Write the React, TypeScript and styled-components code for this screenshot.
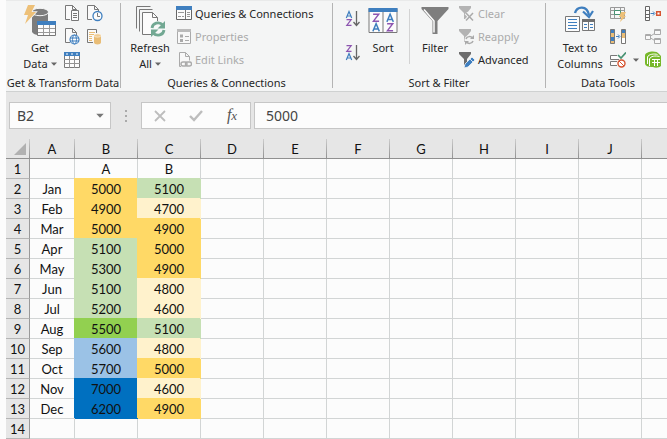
import React from "react";
import styled, { createGlobalStyle } from "styled-components";

const GlobalStyle = createGlobalStyle`
  * { box-sizing: border-box; }
  html { overflow: hidden; }
  body {
    margin: 0;
    background: #fcfcfc;
    color: #262626;
    font: 11px/16px "Noto Sans", "Open Sans", sans-serif;
  }
  button, input { font: inherit; color: inherit; }
`;

const Page = styled.main`
  padding-left: 6px;
  overflow: hidden;
`;

/* ---------- Ribbon ---------- */

const Ribbon = styled.header`
  display: flex;
  height: 92px;
  padding-top: 1px;
  background: #f4f5f5;
  border-top: 1px solid #e9eaea;
  border-bottom: 1px solid #cfd1d1;
`;

const Group = styled.section<{ $width: number }>`
  flex: none;
  display: flex;
  flex-direction: column;
  width: ${(p) => p.$width}px;
`;

const GroupBody = styled.div<{ $indent: number }>`
  display: flex;
  height: 73px;
  padding-left: ${(p) => p.$indent}px;
`;

const GroupLabel = styled.h2`
  margin: 0;
  font-size: 11px;
  line-height: 16px;
  font-weight: 400;
  text-align: center;
  white-space: nowrap;
`;

const Separator = styled.div<{ $inner?: boolean }>`
  flex: none;
  width: 1px;
  height: ${(p) => (p.$inner ? 55 : 85)}px;
  margin: ${(p) => (p.$inner ? "7px 8px 0" : "1px 0 0")};
  background: ${(p) => (p.$inner ? "#d3d3d3" : "#b4b4b4")};
`;

const PlainButton = styled.button`
  padding: 0;
  border: 0;
  background: none;
  white-space: nowrap;
  &:hover:enabled { background: #dcdcdc; }
  &:disabled { color: #ababab; }
  svg { display: block; }
`;

const LargeButton = styled(PlainButton)<{ $width: number }>`
  flex: none;
  display: flex;
  flex-direction: column;
  align-items: center;
  width: ${(p) => p.$width}px;
  padding-top: 2px;
`;

const LargeIcon = styled.span`
  display: flex;
  height: 36px;
`;

const Line = styled.span`
  display: flex;
  align-items: center;
  gap: 3px;
`;

const IconGrid = styled.div<{ $columns: string; $row?: number }>`
  display: grid;
  grid-template-columns: ${(p) => p.$columns};
  grid-auto-rows: ${(p) => p.$row ?? 23}px;
`;

const IconButton = styled(PlainButton)`
  display: grid;
  place-items: center;
`;

const CommandList = styled.div<{ $indent?: number }>`
  display: flex;
  flex-direction: column;
  padding-left: ${(p) => p.$indent ?? 0}px;
`;

const Command = styled(PlainButton)`
  display: flex;
  align-items: center;
  gap: 3px;
  height: 23px;
`;

/* ---------- Formula bar ---------- */

const FormulaBar = styled.div`
  display: flex;
  height: 47px;
  padding: 10px 0 10px 3px;
  background: #e6e6e6;
  color: #444;
  font-size: 14px;
`;

const Box = styled.div<{ $width: number }>`
  flex: none;
  display: flex;
  width: ${(p) => p.$width}px;
  background: #fcfcfc;
  border: 1px solid #c6c6c6;
`;

const Field = styled.input`
  flex: 1;
  min-width: 0;
  padding: 0 0 0 7px;
  border: 0;
  outline: 0;
  background: transparent;
`;

const ValueField = styled(Field)`
  margin-left: 3px;
  padding-left: 11px;
  background: #fcfcfc;
  border: 1px solid #c6c6c6;
  border-right: 0;
`;

const BoxButton = styled(PlainButton)`
  flex: 1;
  display: grid;
  place-items: center;
`;

const DropButton = styled(BoxButton)`
  flex: 0 0 20px;
`;

const Grip = styled.span`
  flex: none;
  display: grid;
  place-items: center;
  width: 30px;
`;

const FxLabel = styled.span`
  font: italic 16px/20px "Liberation Serif", serif;
  color: #555;
  small { font-size: 13px; }
`;

/* ---------- Sheet ---------- */

const Sheet = styled.table`
  width: 100%;
  min-width: 700px;
  table-layout: fixed;
  border-collapse: separate;
  border-spacing: 0;
  color: #111;
  font: 13px/18px Lato, "Noto Sans", sans-serif;
  tr { height: 20px; }
  th, td { height: 20px; padding: 1px 0 0; font-weight: 400; text-align: center; }
`;

const Col = styled.col<{ $width?: number }>`
  width: ${(p) => (p.$width ? `${p.$width}px` : "auto")};
`;

const ColumnHead = styled.th`
  border-right: 1px solid;
  border-image: linear-gradient(#cfcfcf, #8f8f8f) 1;
  border-bottom: 1px solid #999;
  background: #e6e6e6;
`;

const Corner = styled(ColumnHead)`
  svg { display: block; margin-left: auto; margin-right: 3px; }
`;

const RowHead = styled.th`
  background: #e6e6e6;
  border-right: 1px solid #999;
  border-bottom: 1px solid #b5b5b5;
`;

const Cell = styled.td<{ $fill?: string }>`
  border: solid ${(p) => p.$fill ?? "#d2d5d5"};
  border-width: 0 1px 1px 0;
  ${(p) => p.$fill && `background: ${p.$fill}; box-shadow: -1px -1px 0 ${p.$fill};`}
`;

/* ---------- Icons ---------- */

const grey = "#787878";
const blue = "#3f7fbf";
const orange = "#e9bd76";

const Caret = ({ w = 6, color = "#666" }: { w?: number; color?: string }) => (
  <svg width={w} height={w / 2 + 1} viewBox="0 0 6 4"><path d="M0 .5h6L3 3.7z" fill={color} /></svg>
);

const GetDataIcon = () => (
  <svg width="34" height="34" viewBox="0 0 34 34">
    <path d="M9 8v20c1 2 4 3 6 3V17h10V8z" fill="#7c7c7c" />
    <ellipse cx="17" cy="8" rx="8.5" ry="3.7" fill="#7c7c7c" stroke="#f4f5f5" strokeWidth="1" />
    <path d="M5 1h7L8.500 8H13L2 20l3-9H1z" fill="#edc078" stroke="#f4f5f5" strokeWidth="1.600" paintOrder="stroke" />
    <path d="M14.500 17.500h18v14h-18z" fill="#fcfcfc" stroke="#777" />
    <path d="M14 17h19v4H14z" fill={blue} />
    <path d="M20.500 21v10M26.500 21v10M15 24.500h17M15 28.500h17" stroke="#9a9a9a" fill="none" />
  </svg>
);

const Doc = ({ stroke = grey }: { stroke?: string }) => (
  <path d="M7 14.500H2.500V.5h7l4 4v4M9.500.5v4h4" fill="#fafafa" stroke={stroke} />
);

const DocTextIcon = () => (
  <svg width="18" height="17" viewBox="0 0 18 17">
    <Doc /><path d="M8.500 5.500h7v10h-7z" fill="#fcfcfc" stroke={grey} />
    <path d="M10 8.500h4M10 10.500h4M10 12.500h4" stroke={grey} />
  </svg>
);
const DocClockIcon = () => (
  <svg width="18" height="17" viewBox="0 0 18 17">
    <Doc /><circle cx="12.500" cy="11" r="4.500" fill="#fcfcfc" stroke={blue} strokeWidth="1.300" />
    <path d="M12.500 8v3.500H15" fill="none" stroke={grey} />
  </svg>
);
const DocGlobeIcon = () => (
  <svg width="18" height="17" viewBox="0 0 18 17">
    <Doc /><circle cx="11.500" cy="11.500" r="4.500" fill="#fcfcfc" stroke={blue} strokeWidth="1.200" />
    <path d="M7 10h9M7 13h9" stroke={blue} /><ellipse cx="11.500" cy="11.500" rx="2" ry="4.500" fill="none" stroke={blue} />
  </svg>
);
const RecentIcon = () => (
  <svg width="16" height="17" viewBox="0 0 16 17">
    <path d="M7 14.500H1.500V1.500h9V5" fill="#fafafa" stroke={grey} />
    <path d="M3 4.500h6M3 6.500h5M3 8.500h3M3 10.500h3M3 12.500h3" stroke={orange} />
    <path d="M8 7.500v7c0 2.500 7 2.500 7 0v-7z" fill={orange} />
    <ellipse cx="11.500" cy="7.500" rx="3.500" ry="1.700" fill="#f0cd95" stroke="#fff" strokeWidth=".5" />
  </svg>
);
const TableIcon = () => (
  <svg width="16" height="16" viewBox="0 0 16 16">
    <path d="M.5.5h15v15H.5z" fill="#fcfcfc" stroke={grey} />
    <path d="M0 0h16v4H0z" fill={blue} /><path d="M2 2h2M7 2h2M12 2h2" stroke="#fff" />
    <path d="M5.500 4v12M10.500 4v12M0 7.500h16M0 11.500h16" stroke="#929292" />
  </svg>
);
const RefreshIcon = () => (
  <svg width="32" height="34" viewBox="0 0 32 34">
    <path d="M2.500 24.500V2.500h14M5.500 27.500V5.500h13" fill="none" stroke={grey} />
    <path d="M8.500 30.500v-22h10l5 5v17z" fill="#fcfcfc" stroke={grey} />
    <path d="M18.500 8.500v5h5" fill="none" stroke={grey} />
    <circle cx="24" cy="25" r="8" fill="#f7f8f8" />
    <g fill="none" stroke="#72a893" strokeWidth="2.800">
      <path d="M18 24c.5-5 7-7 11-3" /><path d="M30 26c-.5 5-7 7-11 3" />
    </g>
    <path d="M31 17v7.500h-7.500zM17 33v-7.500h7.500z" fill="#72a893" />
  </svg>
);
const QueriesIcon = () => (
  <svg width="16" height="15" viewBox="0 0 16 15">
    <path d="M.5.5h15v13H.5z" fill="#fcfcfc" stroke="#666" /><path d="M0 0h16v4H0z" fill={blue} />
    <path d="M9.500 4v9" stroke="#777" /><path d="M2 6.500h6M2 10.500h3M6 10.500h2M11 6.500h3M11 8.500h3M11 10.500h3" stroke="#999" />
  </svg>
);
const PropertiesIcon = () => (
  <svg width="16" height="16" viewBox="0 0 16 16">
    <path d="M1.500.5h13v14h-13z" fill="#f8f8f8" stroke="#aaa" /><path d="M1 0h14v3H1z" fill="#bbb" />
    <path d="M4 5.500h3v3H4zM4 10h3v3H4z" fill="#aaa" /><path d="M9 7.500h4M9 11.500h4" stroke="#aaa" />
  </svg>
);
const LinksIcon = () => (
  <svg width="16" height="16" viewBox="0 0 16 16">
    <path d="M5 14.500H3.500V.5h6l4 4v4M9.500.5v4h4" fill="#f8f8f8" stroke="#aaa" />
    <g fill="none" stroke="#aaa" strokeWidth="1.400"><rect x="5" y="10" width="6" height="4" rx="2" /><rect x="9.500" y="10" width="6" height="4" rx="2" /></g>
  </svg>
);

/* Strokes for the A and Z marks used by the sort glyphs, on a 6 by 7 grid. */
const Mark = ({ kind, x, y, s = 1 }: { kind: "A" | "Z"; x: number; y: number; s?: number }) => (
  <g transform={`translate(${x} ${y}) scale(${s})`} fill="none" strokeWidth={1.200} stroke={kind === "A" ? blue : "#8d55b0"}>
    {kind === "A" ? <path d="M.3 7 3 .5 5.700 7M1.200 5h3.600" /> : <path d="M.5.6h4.700L.8 6.400h4.700" />}
  </g>
);
const SortSmallIcon = ({ desc }: { desc?: boolean }) => (
  <svg width="16" height="18" viewBox="0 0 16 18">
    <Mark kind={desc ? "Z" : "A"} x={1} y={1} /><Mark kind={desc ? "A" : "Z"} x={1} y={9} />
    <path d="M11.500 1v14M8.500 12l3 3.500 3-3.500" fill="none" stroke="#666" strokeWidth="1.300" />
  </svg>
);
const SortIcon = () => (
  <svg width="30" height="32" viewBox="0 0 30 32">
    <path d="M1 4.500h28v24H1z" fill="#fcfcfc" stroke={grey} /><path d="M.5 4h29v4H.5z" fill={blue} />
    <path d="M15 8v20" stroke={grey} />
    <Mark kind="Z" x={4.500} y={9.500} s={1.200} /><Mark kind="A" x={4.500} y={19} s={1.200} />
    <Mark kind="A" x={18.500} y={9.500} s={1.200} /><Mark kind="Z" x={18.500} y={19} s={1.200} />
  </svg>
);
const FilterIcon = () => (
  <svg width="28" height="32" viewBox="0 0 28 32">
    <path d="M.5 3h27v2l-11 12v13h-5V17L.5 5z" fill="#7e7e7e" />
    <path d="M3 5.500 13 17v11.500" fill="none" stroke="#fcfcfc" strokeWidth="1.500" />
  </svg>
);
const Funnel = ({ color }: { color: string }) => <path d="M0 0h12v2L8 7v6H5V7L0 2z" fill={color} />;
const ClearIcon = () => (
  <svg width="16" height="16" viewBox="0 0 16 16"><Funnel color="#b3b3b3" /><path d="m7 7 7 7.500m0-7.500-7 7.500" stroke="#f4f5f5" strokeWidth="3.500" /><path d="m7 7 7 7.500m0-7.500-7 7.500" stroke="#aaa" strokeWidth="1.500" /></svg>
);
const ReapplyIcon = () => (
  <svg width="16" height="16" viewBox="0 0 16 16">
    <Funnel color="#b3b3b3" /><circle cx="10.500" cy="11" r="5" fill="#f4f5f5" />
    <path d="M7 10c1-3 5-3 6.500-1M14 12c-1 3-5 3-6.500 1" fill="none" stroke="#aaa" strokeWidth="1.500" />
    <path d="M15 6v4h-4zM6 16v-4h4z" fill="#aaa" />
  </svg>
);
const AdvancedIcon = () => (
  <svg width="16" height="16" viewBox="0 0 16 16">
    <Funnel color="#6d6d6d" /><path d="m5 16 1-4 7-7 3 3-7 7z" fill={blue} stroke="#f4f5f5" strokeWidth=".8" /><path d="m11 7 3 3" stroke="#fff" strokeWidth=".8" />
  </svg>
);
const TextColumnsIcon = () => (
  <svg width="32" height="34" viewBox="0 0 32 34">
    <path d="M11 9c2-7 12-8 14 2" fill="none" stroke={blue} strokeWidth="2.400" /><path d="M19 7.500 25 13l4-6" fill="none" stroke={blue} strokeWidth="2.200" />
    <path d="M1.500 12.500h14v15h-14z" fill="#fcfcfc" stroke={grey} />
    <path d="M4 15.500h9M4 18.500h9M4 21.500h9M4 24.500h9" stroke={blue} />
    <path d="M18.500 16.500h12v10h-12z" fill="#fcfcfc" stroke={grey} /><path d="M18 15h13v3H18z" fill="#707070" />
    <path d="M24.500 18v9" stroke={grey} /><path d="M20 20.500h3M20 23.500h3M26 20.500h3M26 23.500h3" stroke={blue} />
  </svg>
);
const FlashFillIcon = () => (
  <svg width="16" height="16" viewBox="0 0 16 16">
    <path d="M.5 1.500h14v11H.5zM.5 4.500h14M.5 8.500h14M4.500 1v11M10.500 1v11" fill="none" stroke="#999" />
    <path d="M4.500 4.500h6v4h-6z" fill="#fff" stroke="#469171" /><path d="M11 6h5l-2 4h2l-6 6 1.500-5H9z" fill="#edc078" />
  </svg>
);
const DuplicatesIcon = () => (
  <svg width="16" height="16" viewBox="0 0 16 16">
    <path d="M.5.500h4v14h-4z" fill={blue} stroke={grey} /><path d="M1 4h3v4H1zM1 12h3v2H1z" fill={orange} />
    <path d="M11.500.5h4v14h-4z" fill={orange} stroke={grey} /><path d="M12 1h3v3h-3z" fill={blue} /><path d="M12 9h3v5h-3z" fill="#fff" />
    <path d="M6 7.500h3M8 5.500l2 2-2 2" fill="none" stroke={blue} />
  </svg>
);
const ValidationIcon = () => (
  <svg width="16" height="16" viewBox="0 0 16 16">
    <path d="M9 7.500H.5v-4H7M7 13.500H.5v-4H7" fill="#fcfcfc" stroke={grey} />
    <path d="m8 3 3 3 5-5.500" fill="none" stroke="#469171" strokeWidth="1.700" />
    <circle cx="11.500" cy="11.500" r="3.500" fill="#fff" stroke="#d65532" strokeWidth="1.400" /><path d="m9 9 5 5" stroke="#d65532" />
  </svg>
);
const ConsolidateIcon = () => (
  <svg width="16" height="16" viewBox="0 0 16 16">
    <path d="M.5.5h4v14h-4zM.5 4.500h4M.5 8.500h4M.5 11.500h4" fill="#fcfcfc" stroke="#666" />
    <path d="M5.500 7.500H9M8 5.500l2 2-2 2" fill="none" stroke={blue} /><path d="M11.700 5.700h3.600v3.600h-3.600z" fill="#fff" stroke="#d65532" strokeWidth="1.500" />
  </svg>
);
const RelationsIcon = () => (
  <svg width="16" height="16" viewBox="0 0 16 16">
    <path d="m4 8 8-5M4 8l8 5" stroke="#aaa" />
    <path d="M.5 5.500h5v5h-5zM9.500.5h6v5h-6zM9.500 9.500h6v5h-6z" fill="#f8f8f8" stroke="#aaa" />
    <path d="M1 6.500h4M10 1.500h5M10 10.500h5" stroke="#aaa" />
  </svg>
);
const DataModelIcon = () => (
  <svg width="17" height="17" viewBox="0 0 17 17">
    <path d="M0 4C1 0 12-1 14 3l2 2v10c-2 2-6 2-8 1-5 0-8-1-8-4z" fill="#77b82a" />
    <path d="M2.500 13V6c1-3 7-3.500 10-2.500M4.500 15V8c1-3 6-3.500 10-2.500" fill="none" stroke="#fff" />
    <path d="M7 8.500h8M7 11.500h8M9.500 8v7M12.500 8v7" fill="none" stroke="#fff" />
  </svg>
);

/* ---------- Data ---------- */

const gold = "#ffd966";
const cream = "#fff2cc";
const mint = "#c6e0b4";
const sky = "#9bc2e6";
const deep = "#0070c0";

const columns = ["A", "B", "C", "D", "E", "F", "G", "H", "I", "J", ""];

type Entry = [string, number, string, number, string];
const months: Entry[] = [
  ["Jan", 5000, gold, 5100, mint],
  ["Feb", 4900, gold, 4700, cream],
  ["Mar", 5000, gold, 4900, gold],
  ["Apr", 5100, mint, 5000, gold],
  ["May", 5300, mint, 4900, gold],
  ["Jun", 5100, mint, 4800, cream],
  ["Jul", 5200, mint, 4600, cream],
  ["Aug", 5500, "#92d050", 5100, mint],
  ["Sep", 5600, sky, 4800, cream],
  ["Oct", 5700, sky, 5000, gold],
  ["Nov", 7000, deep, 4600, cream],
  ["Dec", 6200, deep, 4900, gold],
];

const Blanks = ({ count }: { count: number }) => (
  <>{Array.from({ length: count }, (_, i) => <Cell key={i} />)}</>
);

export default function App() {
  return (
    <Page>
      <GlobalStyle />
      <Ribbon>
        <Group $width={114}>
          <GroupBody $indent={13}>
            <LargeButton $width={42}>
              <LargeIcon><GetDataIcon /></LargeIcon>
              <Line>Get</Line>
              <Line>Data <Caret /></Line>
            </LargeButton>
            <IconGrid $columns="22px 22px">
              <IconButton aria-label="From Text/CSV"><DocTextIcon /></IconButton>
              <IconButton aria-label="Recent Sources"><DocClockIcon /></IconButton>
              <IconButton aria-label="From Web"><DocGlobeIcon /></IconButton>
              <IconButton aria-label="Existing Connections"><RecentIcon /></IconButton>
              <IconButton aria-label="From Table/Range"><TableIcon /></IconButton>
            </IconGrid>
          </GroupBody>
          <GroupLabel>Get &amp; Transform Data</GroupLabel>
        </Group>
        <Separator />
        <Group $width={211}>
          <GroupBody $indent={4}>
            <LargeButton $width={50}>
              <LargeIcon><RefreshIcon /></LargeIcon>
              <Line>Refresh</Line>
              <Line>All <Caret /></Line>
            </LargeButton>
            <CommandList $indent={1}>
              <Command><QueriesIcon />Queries &amp; Connections</Command>
              <Command disabled><PropertiesIcon />Properties</Command>
              <Command disabled><LinksIcon />Edit Links</Command>
            </CommandList>
          </GroupBody>
          <GroupLabel>Queries &amp; Connections</GroupLabel>
        </Group>
        <Separator />
        <Group $width={212}>
          <GroupBody $indent={8}>
            <IconGrid $columns="24px" $row={34}>
              <IconButton aria-label="Sort A to Z"><SortSmallIcon /></IconButton>
              <IconButton aria-label="Sort Z to A"><SortSmallIcon desc /></IconButton>
            </IconGrid>
            <LargeButton $width={36}>
              <LargeIcon><SortIcon /></LargeIcon>
              <Line>Sort</Line>
            </LargeButton>
            <Separator $inner />
            <LargeButton $width={34}>
              <LargeIcon><FilterIcon /></LargeIcon>
              <Line>Filter</Line>
            </LargeButton>
            <CommandList $indent={7}>
              <Command disabled><ClearIcon />Clear</Command>
              <Command disabled><ReapplyIcon />Reapply</Command>
              <Command><AdvancedIcon />Advanced</Command>
            </CommandList>
          </GroupBody>
          <GroupLabel>Sort &amp; Filter</GroupLabel>
        </Group>
        <Separator />
        <Group $width={124}>
          <GroupBody $indent={9}>
            <LargeButton $width={50}>
              <LargeIcon><TextColumnsIcon /></LargeIcon>
              <Line>Text to</Line>
              <Line>Columns</Line>
            </LargeButton>
            <IconGrid $columns="26px 9px 26px">
              <IconButton aria-label="Flash Fill"><FlashFillIcon /></IconButton>
              <span />
              <IconButton aria-label="Consolidate"><ConsolidateIcon /></IconButton>
              <IconButton aria-label="Remove Duplicates"><DuplicatesIcon /></IconButton>
              <span />
              <IconButton aria-label="Relationships" disabled><RelationsIcon /></IconButton>
              <IconButton aria-label="Data Validation"><ValidationIcon /></IconButton>
              <IconButton aria-label="Data Validation options"><Caret /></IconButton>
              <IconButton aria-label="Manage Data Model"><DataModelIcon /></IconButton>
            </IconGrid>
          </GroupBody>
          <GroupLabel>Data Tools</GroupLabel>
        </Group>
      </Ribbon>

      <FormulaBar>
        <Box $width={102}>
          <Field aria-label="Name box" defaultValue="B2" />
          <DropButton aria-label="Named ranges"><Caret w={8} color="#777" /></DropButton>
        </Box>
        <Grip>
          <svg width="2" height="12" viewBox="0 0 2 12"><path d="M0 0h2v2H0zM0 5h2v2H0zM0 10h2v2H0z" fill="#aaa" /></svg>
        </Grip>
        <Box $width={110}>
          <BoxButton aria-label="Cancel">
            <svg width="12" height="12" viewBox="0 0 12 12"><path d="m1 1 10 10M11 1 1 11" stroke="#bdbdbd" strokeWidth="1.800" /></svg>
          </BoxButton>
          <BoxButton aria-label="Enter">
            <svg width="14" height="12" viewBox="0 0 14 12"><path d="m1 6 4 4 8-9" fill="none" stroke="#bdbdbd" strokeWidth="2.400" /></svg>
          </BoxButton>
          <BoxButton aria-label="Insert Function"><FxLabel>f<small>x</small></FxLabel></BoxButton>
        </Box>
        <ValueField aria-label="Formula bar" defaultValue="5000" />
      </FormulaBar>

      <Sheet>
        <colgroup>
          <Col $width={24} />
          <Col $width={45} />
          {columns.slice(1, -1).map((c) => <Col key={c} $width={63} />)}
          <Col />
        </colgroup>
        <thead>
          <tr>
            <Corner aria-label="Select all">
              <svg width="12" height="12" viewBox="0 0 12 12"><path d="M12 0v12H0z" fill="#b1b1b1" /></svg>
            </Corner>
            {columns.map((c) => <ColumnHead key={c} scope="col">{c}</ColumnHead>)}
          </tr>
        </thead>
        <tbody>
          <tr>
            <RowHead scope="row">1</RowHead>
            <Cell /><Cell>A</Cell><Cell>B</Cell>
            <Blanks count={8} />
          </tr>
          {months.map(([name, a, aFill, b, bFill], i) => (
            <tr key={name}>
              <RowHead scope="row">{i + 2}</RowHead>
              <Cell>{name}</Cell>
              <Cell $fill={aFill}>{a}</Cell>
              <Cell $fill={bFill}>{b}</Cell>
              <Blanks count={8} />
            </tr>
          ))}
          <tr>
            <RowHead scope="row">14</RowHead>
            <Blanks count={11} />
          </tr>
        </tbody>
      </Sheet>
    </Page>
  );
}
